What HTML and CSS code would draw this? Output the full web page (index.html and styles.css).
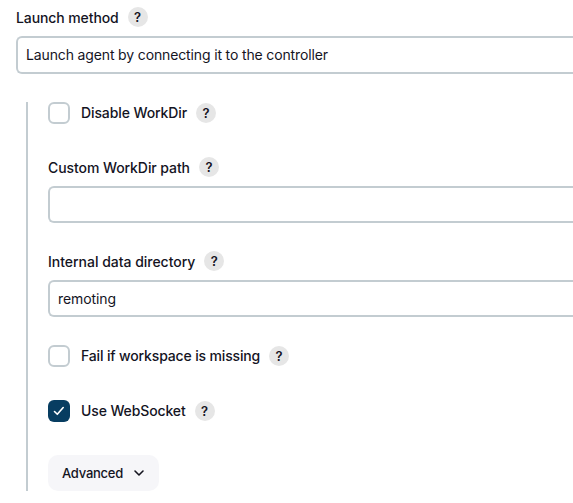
FILE: index.html
```html
<!DOCTYPE html>
<html lang="en">
<head>
<meta charset="utf-8">
<title>Launch method</title>
<link rel="stylesheet" href="styles.css">
</head>
<body>
<form class="form">
  <div class="heading launch"><span class="label">Launch method</span><span class="help">?</span></div>
  <div class="field select">Launch agent by connecting it to the controller</div>
  <div class="nested">
    <div class="check-row"><span class="box"></span><span class="label">Disable WorkDir</span><span class="help">?</span></div>
    <div class="group custom">
      <div class="heading"><span class="label">Custom WorkDir path</span><span class="help">?</span></div>
      <div class="field"></div>
    </div>
    <div class="group internal">
      <div class="heading"><span class="label">Internal data directory</span><span class="help">?</span></div>
      <div class="field">remoting</div>
    </div>
    <div class="check-row fail"><span class="box"></span><span class="label">Fail if workspace is missing</span><span class="help">?</span></div>
    <div class="check-row socket"><span class="box checked"><svg width="22" height="22" viewBox="0 0 22 22"><path d="M6.5 11.5L9.3 14.3L15.2 7.5"/></svg></span><span class="label">Use WebSocket</span><span class="help">?</span></div>
    <div class="advanced"><span>Advanced</span><svg width="12" height="12" viewBox="0 0 12 12"><path d="M2 4L6 8L10 4"/></svg></div>
  </div>
</form>
</body>
</html>
```
FILE: styles.css
```css
* { box-sizing: border-box; }
body {
  margin: 0;
  background: #fff;
  color: #14141f;
  font: 400 14px/20px Inter, "Liberation Sans", sans-serif;
}
.form { padding: 7px 0 0 16px; }
.heading { display: flex; height: 20px; gap: 9px; margin-bottom: 9px; }
.label { font-weight: 500; white-space: nowrap; letter-spacing: -0.1px; }
.heading .label { padding-top: 1px; }
.custom .label { letter-spacing: -0.08px; }
.internal .label { letter-spacing: -0.02px; }
.help {
  width: 20px;
  height: 20px;
  border-radius: 50%;
  background: #e6e6e6;
  font-size: 13px;
  line-height: 21px;
  font-weight: 600;
  text-align: center;
}
.field {
  height: 37px;
  border: 2px solid #c3ccd1;
  border-right: 0;
  border-radius: 6px 0 0 6px;
  padding: 7px 8px;
  letter-spacing: -0.1px;
}
.select { height: 38px; letter-spacing: -0.14px; }
.nested {
  height: 389px;
  margin: 28px 0 0 10px;
  padding-left: 20px;
  border-left: 2px solid #c3ccd1;
}
.check-row { display: flex; align-items: center; height: 22px; }
.check-row .label { margin: 0 9px 0 11px; }
.box {
  width: 22px;
  height: 22px;
  border: 2px solid #c3ccd1;
  border-radius: 6px;
}
.checked { border: 0; background: #073d61; }
svg { display: block; fill: none; stroke-linecap: round; stroke-linejoin: round; }
.checked svg { stroke: #fff; stroke-width: 1.6; }
.custom { margin-top: 33px; }
.internal { margin-top: 28px; }
.fail { margin-top: 28px; }
.fail .label { letter-spacing: -0.15px; }
.socket { margin-top: 33px; }
.socket .label { letter-spacing: -0.12px; }
.advanced {
  display: flex;
  align-items: center;
  justify-content: space-between;
  width: 111px;
  height: 36px;
  margin-top: 33px;
  padding: 0 14px;
  border-radius: 10px;
  background: #f6f6f9;
  font-size: 13px;
  font-weight: 500;
  letter-spacing: -0.25px;
}
.advanced svg { stroke: #14141f; stroke-width: 1.6; }
```
